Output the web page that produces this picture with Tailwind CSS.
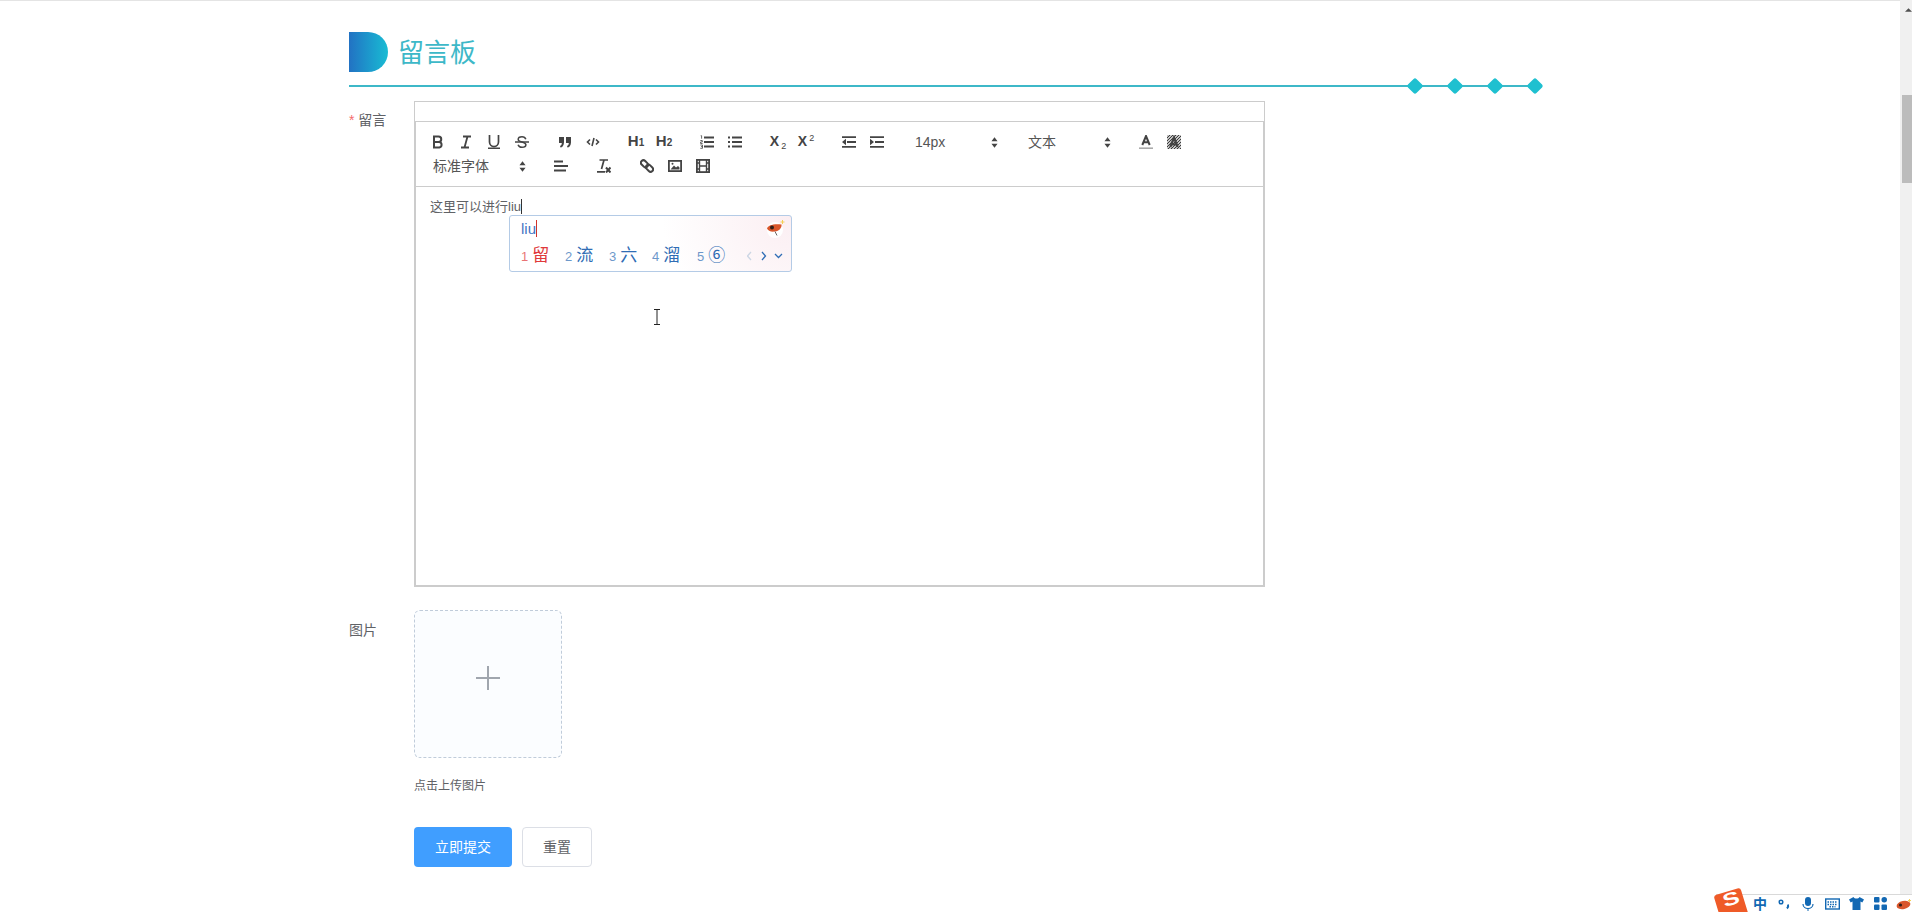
<!DOCTYPE html>
<html>
<head>
<meta charset="utf-8">
<script src="https://cdn.jsdelivr.net/npm/@tailwindcss/browser@4"></script>
</head>
<body class="w-[1912px] h-[912px] overflow-hidden bg-white relative font-['Liberation_Sans','Noto_Sans_CJK_SC',sans-serif] text-[#606266]">
<div class="h-px bg-[#e4e4e4]"></div>
<main class="w-[1186px] ml-[349px] flex flex-col">
  <header class="h-[86px] relative border-b-2 border-[#3db8c8]">
    <div class="flex items-center gap-[10px] pt-[30px]">
      <div class="w-[39px] h-[40px] rounded-r-[20px] bg-gradient-to-r from-[#2272c3] to-[#19bcd3]"></div>
      <h1 class="text-[26px] leading-[40px] pt-[2px] text-[#3db8c8]">留言板</h1>
    </div>
    <div class="absolute right-[-6px] top-[79px] flex gap-[28px]">
      <i class="w-[12px] h-[12px] block rotate-45 rounded-[2px] bg-[#1fc0d0]"></i>
      <i class="w-[12px] h-[12px] block rotate-45 rounded-[2px] bg-[#1fc0d0]"></i>
      <i class="w-[12px] h-[12px] block rotate-45 rounded-[2px] bg-[#1fc0d0]"></i>
      <i class="w-[12px] h-[12px] block rotate-45 rounded-[2px] bg-[#1fc0d0]"></i>
    </div>
  </header>

  <section class="flex mt-[14px]">
    <label class="w-[65px] pt-[9px] text-[14px] leading-[20px]"><span class="text-[#f56c6c]">*</span> 留言</label>
    <div class="w-[851px] shrink-0">
      <div class="h-[20px] border border-b-0 border-[#ccc]"></div>
      <div class="border-2 border-t-0 border-[#ccc] h-[466px] flex flex-col">
        <div class="h-[66px] border-t border-b border-[#ccc] text-[#444] pt-[8px]">
          <div class="flex items-center h-[24px] pl-[8px] gap-[15px]">
            <div class="flex">
              <span class="w-[28px] flex justify-center"><svg viewBox="0 0 14 14" class="w-[14px] h-[14px]" fill="none" stroke="#444" stroke-width="2"><path d="M3 1.500h4.500a2.700 2.700 0 0 1 0 5.500H3zM3 7h5.300a2.800 2.800 0 0 1 0 5.500H3z"/></svg></span>
              <span class="w-[28px] flex justify-center"><svg viewBox="0 0 14 14" class="w-[14px] h-[14px]" fill="none" stroke="#444" stroke-width="1.800"><path d="M4 1.500h8M2 12.500h8M8.500 1.500l-3 11"/></svg></span>
              <span class="w-[28px] flex justify-center"><svg viewBox="0 0 14 14" class="w-[14px] h-[14px]" fill="none" stroke="#444" stroke-width="1.700"><path d="M2.500 0v7a4.500 4.500 0 0 0 9 0V0M1 13.300h12"/></svg></span>
              <span class="w-[28px] flex justify-center"><svg viewBox="0 0 14 14" class="w-[14px] h-[14px]" fill="none" stroke="#444" stroke-width="1.500"><path d="M0 7h14"/><path d="M10.800 4.200C10.300 2.600 8.800 1.800 7 1.800 4.800 1.800 3.200 3 3.200 4.500S4.800 6.400 7 7s3.900 1.300 3.900 2.800-1.700 2.500-3.900 2.500-3.400-.9-3.900-2.600"/></svg></span>
            </div>
            <div class="flex">
              <span class="w-[28px] flex justify-center"><svg viewBox="0 0 14 14" class="w-[14px] h-[14px]" fill="#444"><path d="M1 2h5v5.500C6 10.500 4 12.500 2.500 12.500l-.5-1.500C3.200 10.600 3.800 9.500 3.800 8H1zM8 2h5v5.500C13 10.500 11 12.500 9.500 12.500L9 11c1.200-.4 1.800-1.500 1.800-3H8z"/></svg></span>
              <span class="w-[28px] flex justify-center"><svg viewBox="0 0 14 14" class="w-[14px] h-[14px]" fill="none" stroke="#444" stroke-width="1.600"><path d="M4 4.500 1.500 7 4 9.500M10 4.500 12.500 7 10 9.500M8 3 6 11"/></svg></span>
            </div>
            <div class="flex font-bold text-[15px] leading-[16px]">
              <span class="w-[28px] text-center">H<span class="text-[10px]">1</span></span>
              <span class="w-[28px] text-center">H<span class="text-[10px]">2</span></span>
            </div>
            <div class="flex">
              <span class="w-[28px] flex justify-center"><svg viewBox="0 0 14 14" class="w-[14px] h-[14px]" fill="none" stroke="#444" stroke-width="1.800"><path d="M4 2.500h10M4 7h10M4 11.500h10"/><path d="M.7 .7h.9v3M.3 5.500h2v1.500H.6v1.500h2M.3 10h2.200v3.300H.3M1 11.600h1.500" stroke-width=".8"/></svg></span>
              <span class="w-[28px] flex justify-center"><svg viewBox="0 0 14 14" class="w-[14px] h-[14px]" fill="none" stroke="#444" stroke-width="1.800"><path d="M4 2.500h10M4 7h10M4 11.500h10M0 2.500h2M0 7h2M0 11.500h2"/></svg></span>
            </div>
            <div class="flex font-bold text-[14px] leading-[14px]">
              <span class="w-[28px] flex justify-center items-baseline">X<span class="text-[9px] font-normal translate-y-[3px] ml-[2px]">2</span></span>
              <span class="w-[28px] flex justify-center items-start">X<span class="text-[9px] font-normal -translate-y-[3px] ml-[2px]">2</span></span>
            </div>
            <div class="flex">
              <span class="w-[28px] flex justify-center"><svg viewBox="0 0 14 14" class="w-[14px] h-[14px]" fill="#444"><path d="M0 1.200h14v1.800H0zM5 6.100h9v1.800H5zM0 11h14v1.800H0zM4 3.800v6.400L0 7z"/></svg></span>
              <span class="w-[28px] flex justify-center"><svg viewBox="0 0 14 14" class="w-[14px] h-[14px]" fill="#444"><path d="M0 1.200h14v1.800H0zM5 6.100h9v1.800H5zM0 11h14v1.800H0zM0 3.800v6.400L4 7z"/></svg></span>
            </div>
            <span class="w-[98px] flex items-center justify-between pl-[9px] pr-[6px] text-[14px] text-[#555]"><span>14px</span><svg viewBox="0 0 8 12" class="w-[7px] h-[11px]" fill="#444"><path d="M4 0 7.500 4.500H.5zM4 12 .5 7.500h7z"/></svg></span>
            <span class="w-[98px] flex items-center justify-between pl-[9px] pr-[6px] text-[14px] text-[#555]"><span>文本</span><svg viewBox="0 0 8 12" class="w-[7px] h-[11px]" fill="#444"><path d="M4 0 7.500 4.500H.5zM4 12 .5 7.500h7z"/></svg></span>
            <div class="flex">
              <span class="w-[28px] flex justify-center"><svg viewBox="0 0 14 14" class="w-[14px] h-[14px]"><path d="M3.300 10 7 1l3.700 9M4.700 7.300h4.600" fill="none" stroke="#444" stroke-width="2"/><path d="M0 13.200h14" stroke="#aaa" stroke-width="1.600"/></svg></span>
              <span class="w-[28px] flex justify-center"><svg viewBox="0 0 14 14" class="w-[14px] h-[14px]"><defs><pattern id="hatch" width="3" height="3" patternUnits="userSpaceOnUse"><rect width="3" height="3" fill="#fff"/><path d="M0 3 3 0M-1 1 1 -1M2 4 4 2" stroke="#333" stroke-width="1.100"/></pattern></defs><rect width="14" height="14" fill="url(#hatch)"/><path d="M3.300 12 7 2.500 10.700 12M4.700 9.300h4.600" fill="none" stroke="#444" stroke-width="2.200"/></svg></span>
            </div>
          </div>
          <div class="flex items-center h-[24px] pl-[8px] gap-[15px]">
            <span class="w-[108px] flex items-center justify-between pl-[9px] pr-[6px] text-[14px] text-[#555]"><span>标准字体</span><svg viewBox="0 0 8 12" class="w-[7px] h-[11px]" fill="#444"><path d="M4 0 7.500 4.500H.5zM4 12 .5 7.500h7z"/></svg></span>
            <span class="w-[28px] flex justify-center"><svg viewBox="0 0 14 14" class="w-[14px] h-[14px]" fill="none" stroke="#444" stroke-width="1.800"><path d="M0 2.500h9M0 7h14M0 11.500h12"/></svg></span>
            <span class="w-[28px] flex justify-center"><svg viewBox="0 0 14 14" class="w-[14px] h-[14px]" fill="none" stroke="#444" stroke-width="1.700"><path d="M2.500 1h8.500M7 1 4.500 10M0 12.800h8"/><path d="M9 8.500l4.500 5M13.500 8.500l-4.500 5" stroke-width="2"/></svg></span>
            <div class="flex">
              <span class="w-[28px] flex justify-center"><svg viewBox="0 0 14 14" class="w-[14px] h-[14px]" fill="none" stroke="#444" stroke-width="2"><rect x=".5" y="2.300" width="8" height="5" rx="2.500" transform="rotate(45 4.500 4.800)"/><rect x="5.500" y="6.700" width="8" height="5" rx="2.500" transform="rotate(45 9.500 9.200)"/></svg></span>
              <span class="w-[28px] flex justify-center"><svg viewBox="0 0 14 14" class="w-[14px] h-[14px]"><rect x=".9" y="1.900" width="12.200" height="10.200" fill="none" stroke="#444" stroke-width="1.800"/><path d="M2.500 10.500 6 6.500l2 2 2-1.500 1.500 1.500v2z" fill="#444"/><circle cx="4.500" cy="4.800" r="1" fill="#444"/></svg></span>
              <span class="w-[28px] flex justify-center"><svg viewBox="0 0 14 14" class="w-[14px] h-[14px]" fill="none" stroke="#444"><rect x=".9" y=".9" width="12.200" height="12.200" stroke-width="1.800"/><path d="M3.500 1v12M10.500 1v12M1 4h2.500M3.500 7h7M1 10h2.500M10.500 4H13M10.500 10H13" stroke-width="1.400"/></svg></span>
            </div>
          </div>
        </div>
        <div class="flex-1 px-[14px] py-[10px] text-[13px] leading-[20px]">这里可以进行liu<span class="border-l border-[#333]"></span></div>
      </div>
    </div>
  </section>

  <section class="flex mt-[23px]">
    <label class="w-[65px] pt-[10px] text-[14px] leading-[20px]">图片</label>
    <div class="flex flex-col">
      <div class="w-[148px] h-[148px] rounded-[6px] border border-dashed border-[#c0ccda] bg-[#fbfdff] flex items-center justify-center pb-[12px]">
        <svg viewBox="0 0 24 24" class="w-[24px] h-[24px]" fill="none" stroke="#a0a6ae" stroke-width="2"><path d="M0 12h24M12 0v24"/></svg>
      </div>
      <p class="text-[12px] leading-[18px] mt-[19px] text-[#606266]">点击上传图片</p>
      <div class="flex gap-[10px] mt-[32px]">
        <button class="w-[98px] h-[40px] rounded-[4px] bg-[#409eff] text-white text-[14px]">立即提交</button>
        <button class="w-[70px] h-[40px] rounded-[4px] border border-[#dcdfe6] bg-white text-[#606266] text-[14px]">重置</button>
      </div>
    </div>
  </section>
</main>

<!-- IME candidate window, floating over the editor -->
<div class="absolute left-[509px] top-[215px] w-[283px] h-[57px] rounded-[3px] border border-[#b4cbe6] bg-[radial-gradient(circle_at_100%_0%,#fbeef2_0%,#ffffff_45%)] text-[#2f6db5]">
  <div class="h-[26px] pl-[11px] pt-[3px] text-[15px] leading-[20px] text-[#3f74c4]">liu<span class="border-l border-[#d0342c]"></span></div>
  <div class="flex items-center h-[28px] pl-[11px] text-[17px]">
    <span class="w-[44px] text-[#e0393a]"><span class="text-[13px] opacity-70 mr-[4px]">1</span>留</span>
    <span class="w-[44px]"><span class="text-[13px] opacity-70 mr-[4px]">2</span>流</span>
    <span class="w-[43px]"><span class="text-[13px] opacity-70 mr-[4px]">3</span>六</span>
    <span class="w-[45px]"><span class="text-[13px] opacity-70 mr-[4px]">4</span>溜</span>
    <span class="w-[50px]"><span class="text-[13px] opacity-70 mr-[4px]">5</span>⑥</span>
    <svg viewBox="0 0 40 12" class="w-[40px] h-[12px]" fill="none" stroke-width="1.300"><path d="M4 2 0.500 6 4 10" stroke="#ccd6e4"/><path d="M15 2l3.500 4-3.500 4" stroke="#2f6db5"/><path d="M28 4l3.500 3.500L35 4" stroke="#2f6db5"/></svg>
  </div>
  <svg viewBox="0 0 20 20" class="absolute right-[6px] top-[3px] w-[20px] h-[20px]"><circle cx="10" cy="11" r="8" fill="#fff"/><path d="M2 9.500C3 6 9 4.500 16.500 5.500 17 9 14 12 10 12.500 6 13 3 12 2 9.500Z" fill="#d9562b"/><circle cx="7" cy="8.500" r="2" fill="#33201a"/><path d="M10 12.500l2 4" stroke="#555" stroke-width=".9"/><path d="M17.500 1v4M15.500 3h4" stroke="#f4cf54"/></svg>
</div>

<!-- I-beam mouse cursor -->
<svg viewBox="0 0 8 16" class="absolute left-[653px] top-[309px] w-[8px] h-[16px]" fill="none" stroke="#222"><path d="M1 .5h6M4 .5v15M1 15.500h6"/></svg>

<!-- Browser scrollbar -->
<div class="absolute right-0 top-0 w-[12px] h-[912px] bg-[#f0f0f0]">
  <svg viewBox="0 0 8 4" class="absolute left-[5px] top-[8px] w-[7px] h-[4px]"><path d="M4 0 8 4H0z" fill="#505050"/></svg>
  <div class="absolute left-[2px] right-0 top-[95px] h-[88px] bg-[#bcbcbc]"></div>
</div>

<!-- IME status bar -->
<div class="absolute left-[1716px] top-[894px] w-[196px] h-[18px] bg-white border-t border-[#d9d9d9] flex items-center pl-[32px]">
  <span class="w-[24px] text-center text-[14px] leading-[16px] font-bold text-[#1268b3]">中</span>
  <span class="w-[24px] flex justify-center"><svg viewBox="0 0 12 14" class="w-[12px] h-[14px]" fill="none" stroke="#1268b3" stroke-width="1.500"><circle cx="3" cy="5" r="1.800"/><path d="M10 7.500c.5 1.500 0 3-1 4" stroke-width="2"/></svg></span>
  <span class="w-[24px] flex justify-center"><svg viewBox="0 0 12 14" class="w-[12px] h-[14px]" fill="#1268b3"><rect x="3" y="0" width="6" height="9" rx="3"/><path d="M1 7c0 6 10 6 10 0" fill="none" stroke="#1268b3" stroke-width="1.200"/><path d="M6 11v3" stroke="#1268b3"/></svg></span>
  <span class="w-[24px] flex justify-center"><svg viewBox="0 0 15 12" class="w-[15px] h-[12px]" fill="none" stroke="#1268b3" stroke-width="1.400"><rect x=".7" y="1" width="13.600" height="10"/><path d="M2.500 4h10M2.500 6.500h10M4.500 8.800h6" stroke-dasharray="1.500 1"/></svg></span>
  <span class="w-[24px] flex justify-center"><svg viewBox="0 0 15 13" class="w-[15px] h-[13px]" fill="#1268b3"><path d="M4.500 0 0 2.500 1.700 5.500 3.500 4.500V13h8V4.500l1.800 1L15 2.500 10.500 0c-1 2-5 2-6 0z"/></svg></span>
  <span class="w-[24px] flex justify-center"><svg viewBox="0 0 13 13" class="w-[13px] h-[13px]" fill="#1268b3"><rect width="5.500" height="5.500" rx="1"/><rect x="7.500" width="5.500" height="5.500" rx="2.700"/><rect y="7.500" width="5.500" height="5.500" rx="1"/><rect x="7.500" y="7.500" width="5.500" height="5.500" rx="1"/></svg></span>
</div>
<div class="absolute left-[1717px] top-[891px] w-[28px] h-[28px] rotate-[-17deg] rounded-[3px] bg-[#ef5b28]"></div>
<span class="absolute left-[1725px] top-[889px] w-[12px] text-center h-[20px] rotate-[-17deg] scale-x-140 text-white font-bold text-[18px] leading-[20px]">S</span>
<svg viewBox="0 0 16 12" class="absolute left-[1895px] top-[899px] w-[17px] h-[12px]"><ellipse cx="8" cy="6" rx="7" ry="4" fill="#d9562b" transform="rotate(-12 8 6)"/><circle cx="5" cy="6" r="1.600" fill="#33201a"/><path d="M14 0v3M12.500 1.500h3" stroke="#f4cf54"/></svg>
</body>
</html>
